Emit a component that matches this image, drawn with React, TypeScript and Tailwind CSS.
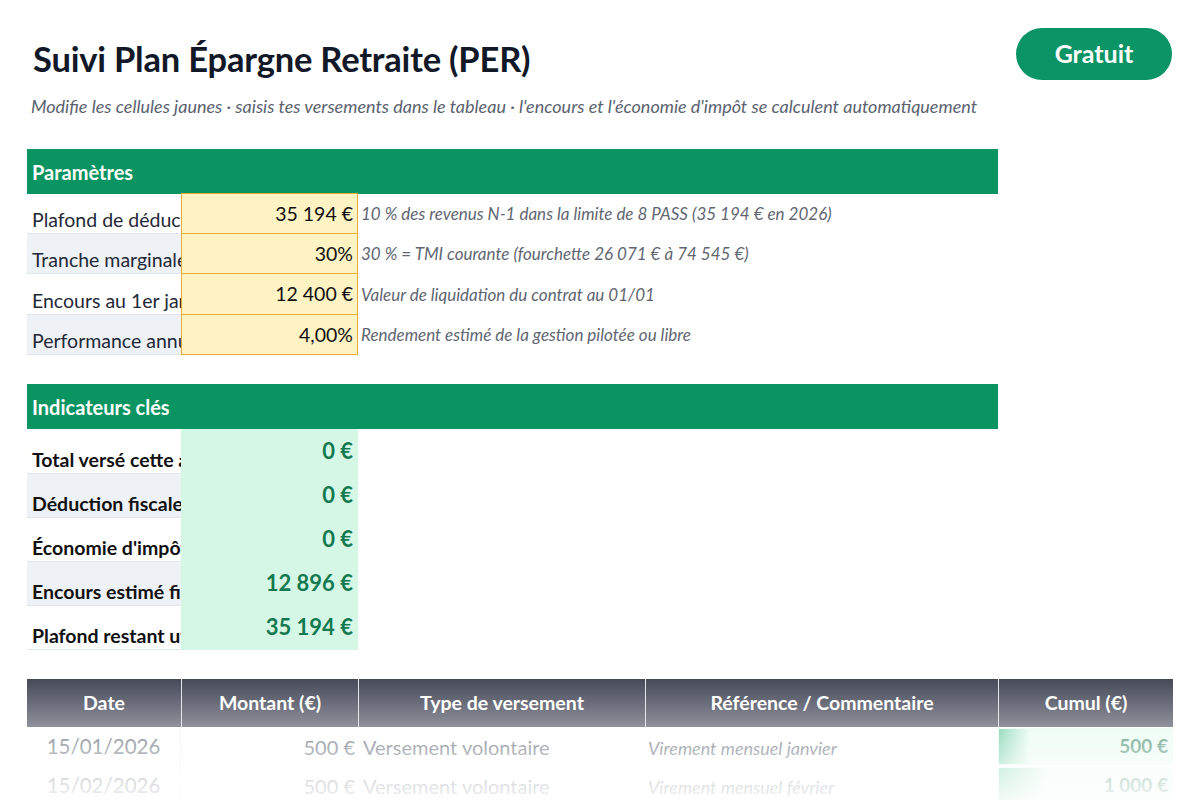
import React from 'react'

// Suivi PER — spreadsheet-like layout

const FONT = { fontFamily: 'Lato, "Open Sans", "Liberation Sans", sans-serif' }

const params = [
  { label: 'Plafond de déduction', value: '35 194 €', note: '10 % des revenus N-1 dans la limite de 8 PASS (35 194 € en 2026)', h: 'h-[40px]', alt: false },
  { label: 'Tranche marginale', value: '30%', note: '30 % = TMI courante (fourchette 26 071 € à 74 545 €)', h: 'h-[40px]', alt: true },
  { label: 'Encours au 1er janvier', value: '12 400 €', note: 'Valeur de liquidation du contrat au 01/01', h: 'h-[41px]', alt: false },
  { label: 'Performance annuelle', value: '4,00%', note: 'Rendement estimé de la gestion pilotée ou libre', h: 'h-[40px]', alt: true },
]

const indicators = [
  { label: 'Total versé cette année', value: '0 €', h: 'h-[45px]', alt: false },
  { label: 'Déduction fiscale', value: '0 €', h: 'h-[44px]', alt: true },
  { label: "Économie d'impôt", value: '0 €', h: 'h-[44px]', alt: false },
  { label: 'Encours estimé fin', value: '12 896 €', h: 'h-[44px]', alt: true },
  { label: 'Plafond restant utilisable', value: '35 194 €', h: 'h-[44px]', alt: false },
]

const versements = [
  { date: '15/01/2026', montant: '500 €', type: 'Versement volontaire', ref: 'Virement mensuel janvier', cumul: '500 €', bar: 31 },
  { date: '15/02/2026', montant: '500 €', type: 'Versement volontaire', ref: 'Virement mensuel février', cumul: '1 000 €', bar: 46 },
]

function SectionHeader({ title }: { title: string }) {
  return (
    <div className="h-[45px] bg-[#0a9462] flex items-center pl-[5px]">
      <span className="text-white font-bold text-[20px]">{title}</span>
    </div>
  )
}

export default function App() {
  return (
    <div className="relative w-[1200px] h-[800px] overflow-hidden bg-white text-[#111827]" style={FONT}>
      {/* Header */}
      <div className="flex items-start justify-between pl-[33px] pr-[28px] pt-[28px]">
        <h1 className="mt-[11px] leading-[40px] text-[34.5px] font-bold text-[#111827] tracking-[-0.2px]">
          Suivi Plan Épargne Retraite (PER)
        </h1>
        <div className="h-[52px] w-[156px] rounded-full bg-[#0b9465] flex items-center justify-center">
          <span className="text-white font-bold text-[25px]">Gratuit</span>
        </div>
      </div>
      <p className="mt-[15px] pl-[31px] leading-[22px] text-[18px] italic text-[#5b6270]">
        Modifie les cellules jaunes · saisis tes versements dans le tableau · l'encours et l'économie d'impôt se calculent automatiquement
      </p>

      {/* Paramètres */}
      <div className="mt-[32px] ml-[27px] w-[971px]">
        <SectionHeader title="Paramètres" />
        {params.map((p) => (
          <div key={p.label} className={`grid grid-cols-[154px_177px_1fr] ${p.h}`}>
            <div className={`overflow-hidden whitespace-nowrap flex items-end pl-[5px] pb-[1px] border-b border-[#e1e5ec] ${p.alt ? 'bg-[#eef1f6]' : 'bg-white'}`}>
              <span className="text-[19.5px] leading-[24px] text-[#1f2937]">{p.label}</span>
            </div>
            <div className="bg-[#fff3c4] border border-[#e8ad35] -mt-px first:mt-0 flex items-center justify-end pr-[4px]">
              <span className="text-[19.5px] leading-[24px] text-[#111]">{p.value}</span>
            </div>
            <div className="flex items-center pl-[3px]">
              <span className="text-[17px] italic text-[#5f6672] whitespace-nowrap">{p.note}</span>
            </div>
          </div>
        ))}
      </div>

      {/* Indicateurs clés */}
      <div className="mt-[29px] ml-[27px] w-[971px]">
        <SectionHeader title="Indicateurs clés" />
        {indicators.map((r) => (
          <div key={r.label} className={`grid grid-cols-[154px_177px_1fr] ${r.h}`}>
            <div className={`overflow-hidden whitespace-nowrap flex items-end pl-[5px] pb-[1px] border-b border-[#e1e5ec] ${r.alt ? 'bg-[#eef1f6]' : 'bg-white'}`}>
              <span className="text-[19.5px] leading-[24px] font-bold text-[#111]">{r.label}</span>
            </div>
            <div className="bg-[#d5f8e6] flex items-center justify-end pr-[5px] pb-[2px]">
              <span className="text-[22px] leading-[26px] font-bold text-[#137a50]">{r.value}</span>
            </div>
            <div />
          </div>
        ))}
      </div>

      {/* Versements */}
      <div className="mt-[29px] ml-[27px] w-[1146px]">
        <div className="grid grid-cols-[154px_177px_287px_353px_175px] h-[48px] bg-gradient-to-b from-[#474b58] to-[#8f919c]">
          {['Date', 'Montant (€)', 'Type de versement', 'Référence / Commentaire', 'Cumul (€)'].map((h, i) => (
            <div key={h} className={`flex items-center justify-center ${i > 0 ? 'border-l border-[#e5e7eb]' : ''}`}>
              <span className="text-white font-bold text-[19.5px]">{h}</span>
            </div>
          ))}
        </div>
        <div className="relative">
          {versements.map((v) => (
            <div key={v.date} className="grid grid-cols-[154px_177px_287px_353px_175px] h-[39px] text-[#4b5563]">
              <div className="flex items-center justify-center border-r border-[#eceef2]">
                <span className="text-[20.5px]">{v.date}</span>
              </div>
              <div className="flex items-center justify-end pr-[3px]">
                <span className="text-[20px]">{v.montant}</span>
              </div>
              <div className="flex items-center pl-[5px]">
                <span className="text-[20px]">{v.type}</span>
              </div>
              <div className="flex items-end pl-[3px] pb-[4px]">
                <span className="text-[18px] italic">{v.ref}</span>
              </div>
              <div className="relative bg-[#e6fbf1] flex items-center justify-end pr-[5px] my-[1px]">
                <div className="absolute left-[1px] top-[1px] bottom-[1px] bg-gradient-to-r from-[#5cc99b] to-[#e6fbf1]" style={{ width: v.bar }} />
                <span className="relative text-[19px] font-bold text-[#2f7d5a]">{v.cumul}</span>
              </div>
            </div>
          ))}
          {/* fade out */}
          <div className="absolute inset-0 bg-gradient-to-b from-white/35 via-white/70 to-white/95" />
        </div>
      </div>
    </div>
  )
}
